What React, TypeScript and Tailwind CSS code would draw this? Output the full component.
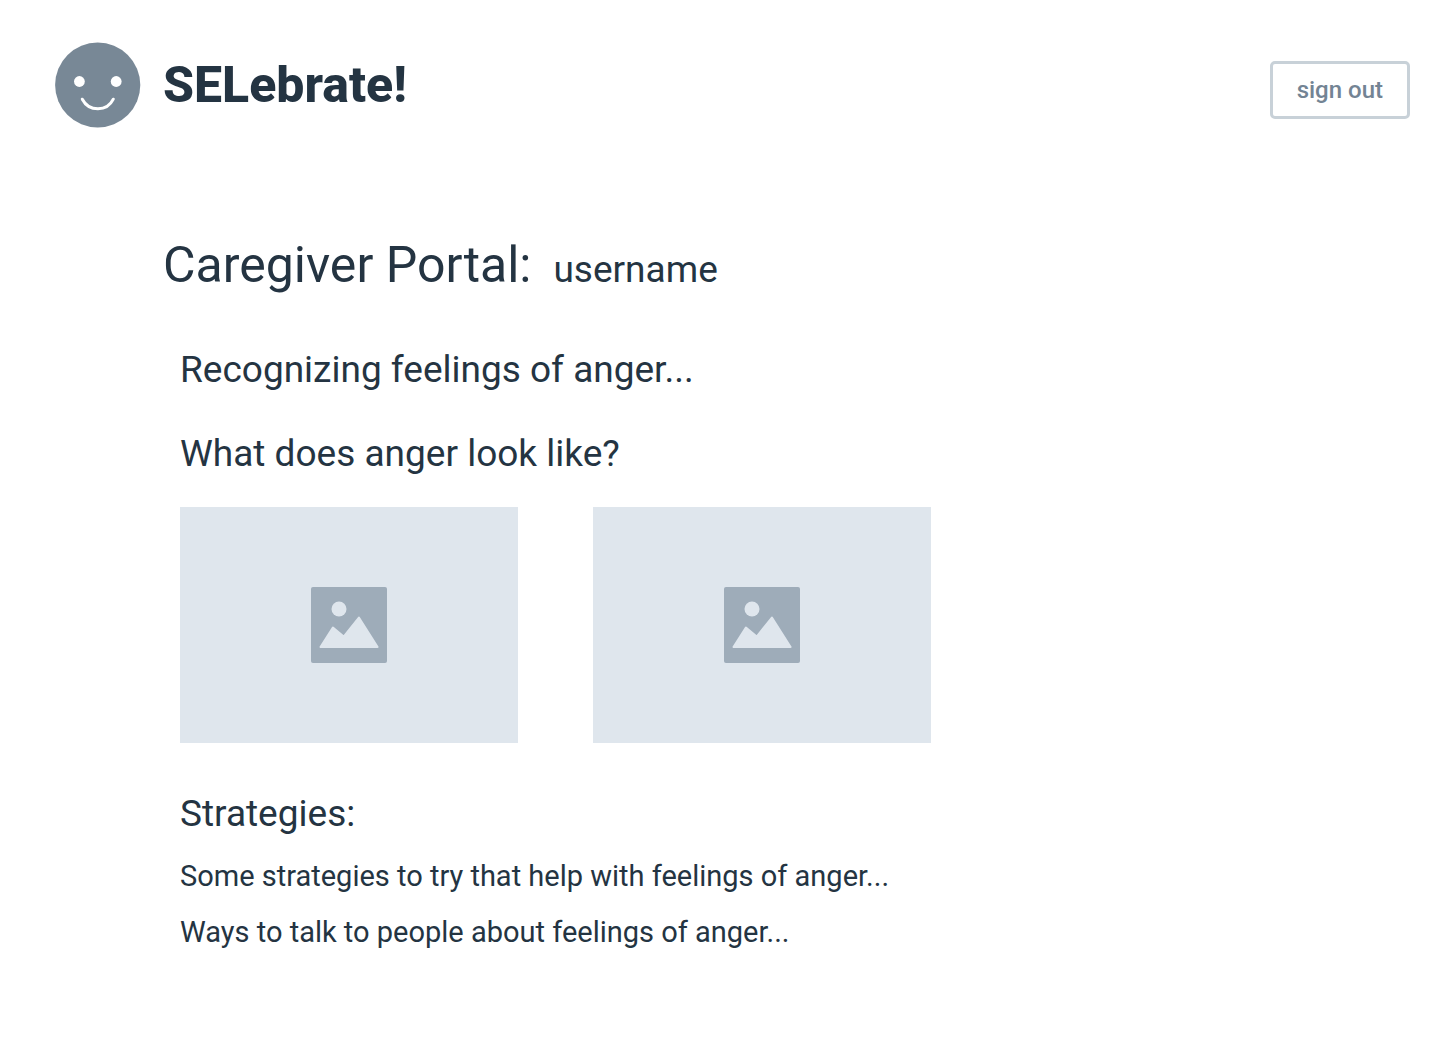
function SmileLogo() {
  return (
    <svg viewBox="0 0 86 86" className="size-[86px] shrink-0" aria-hidden="true">
      <circle cx="42.7" cy="43" r="42.6" fill="#788896" />
      <circle cx="24.4" cy="39.5" r="5.4" fill="#fff" />
      <circle cx="61.2" cy="39.5" r="5.4" fill="#fff" />
      <path d="M27.3 57.200 C34 70 52 70 58.300 57.200" fill="none" stroke="#fff" strokeWidth="3" strokeLinecap="round" />
    </svg>
  );
}

function PicturePlaceholder() {
  return (
    <div className="flex h-[236px] w-[338px] items-center justify-center bg-[#dfe6ed]" role="img" aria-label="Picture placeholder">
      <svg viewBox="0 0 76 76" className="size-[76px]" aria-hidden="true">
        <rect width="76" height="76" rx="2" fill="#9eacb9" />
        <circle cx="28" cy="22" r="7.5" fill="#dfe6ed" />
        <path d="M9.500 60 L21.900 40.500 L32.700 49.500 L47.900 30.500 L66.600 60 Z" fill="#dfe6ed" stroke="#dfe6ed" strokeWidth="2" strokeLinejoin="round" />
      </svg>
    </div>
  );
}

export default function App() {
  return (
    <div className="min-h-screen bg-white font-['Roboto',sans-serif] text-[#243442]">
      <header className="flex items-end justify-between pt-[42px] pr-[30px] pl-[55px]">
        <div className="flex items-center gap-[22px]">
          <SmileLogo />
          <h1 className="text-[50px] leading-[60px] font-extrabold">SELebrate!</h1>
        </div>
        <div className="pb-[9px]">
          <button type="button" className="h-[58px] rounded-[5px] border-3 border-[#c8d1d8] px-6 text-[24px] font-medium text-[#738494]">
            sign out
          </button>
        </div>
      </header>
      <main className="pt-[107px] pl-[163px]">
        <div className="flex items-baseline gap-[22px]">
          <h2 className="text-[50px] leading-[60px]">Caregiver Portal:</h2>
          <span className="text-[37px] leading-[44px]">username</span>
        </div>
        <div className="pt-[53px] pl-[17px]">
          <p className="text-[37px] leading-[44px]">Recognizing feelings of anger...</p>
          <h3 className="pt-10 text-[37px] leading-[44px]">What does anger look like?</h3>
          <div className="flex gap-[75px] pt-[31px]">
            <PicturePlaceholder />
            <PicturePlaceholder />
          </div>
          <h3 className="pt-[49px] text-[37px] leading-[44px]">Strategies:</h3>
          <p className="pt-[22px] text-[29px] leading-[36px]">Some strategies to try that help with feelings of anger...</p>
          <p className="pt-5 text-[29px] leading-[36px]">Ways to talk to people about feelings of anger...</p>
        </div>
      </main>
    </div>
  );
}
